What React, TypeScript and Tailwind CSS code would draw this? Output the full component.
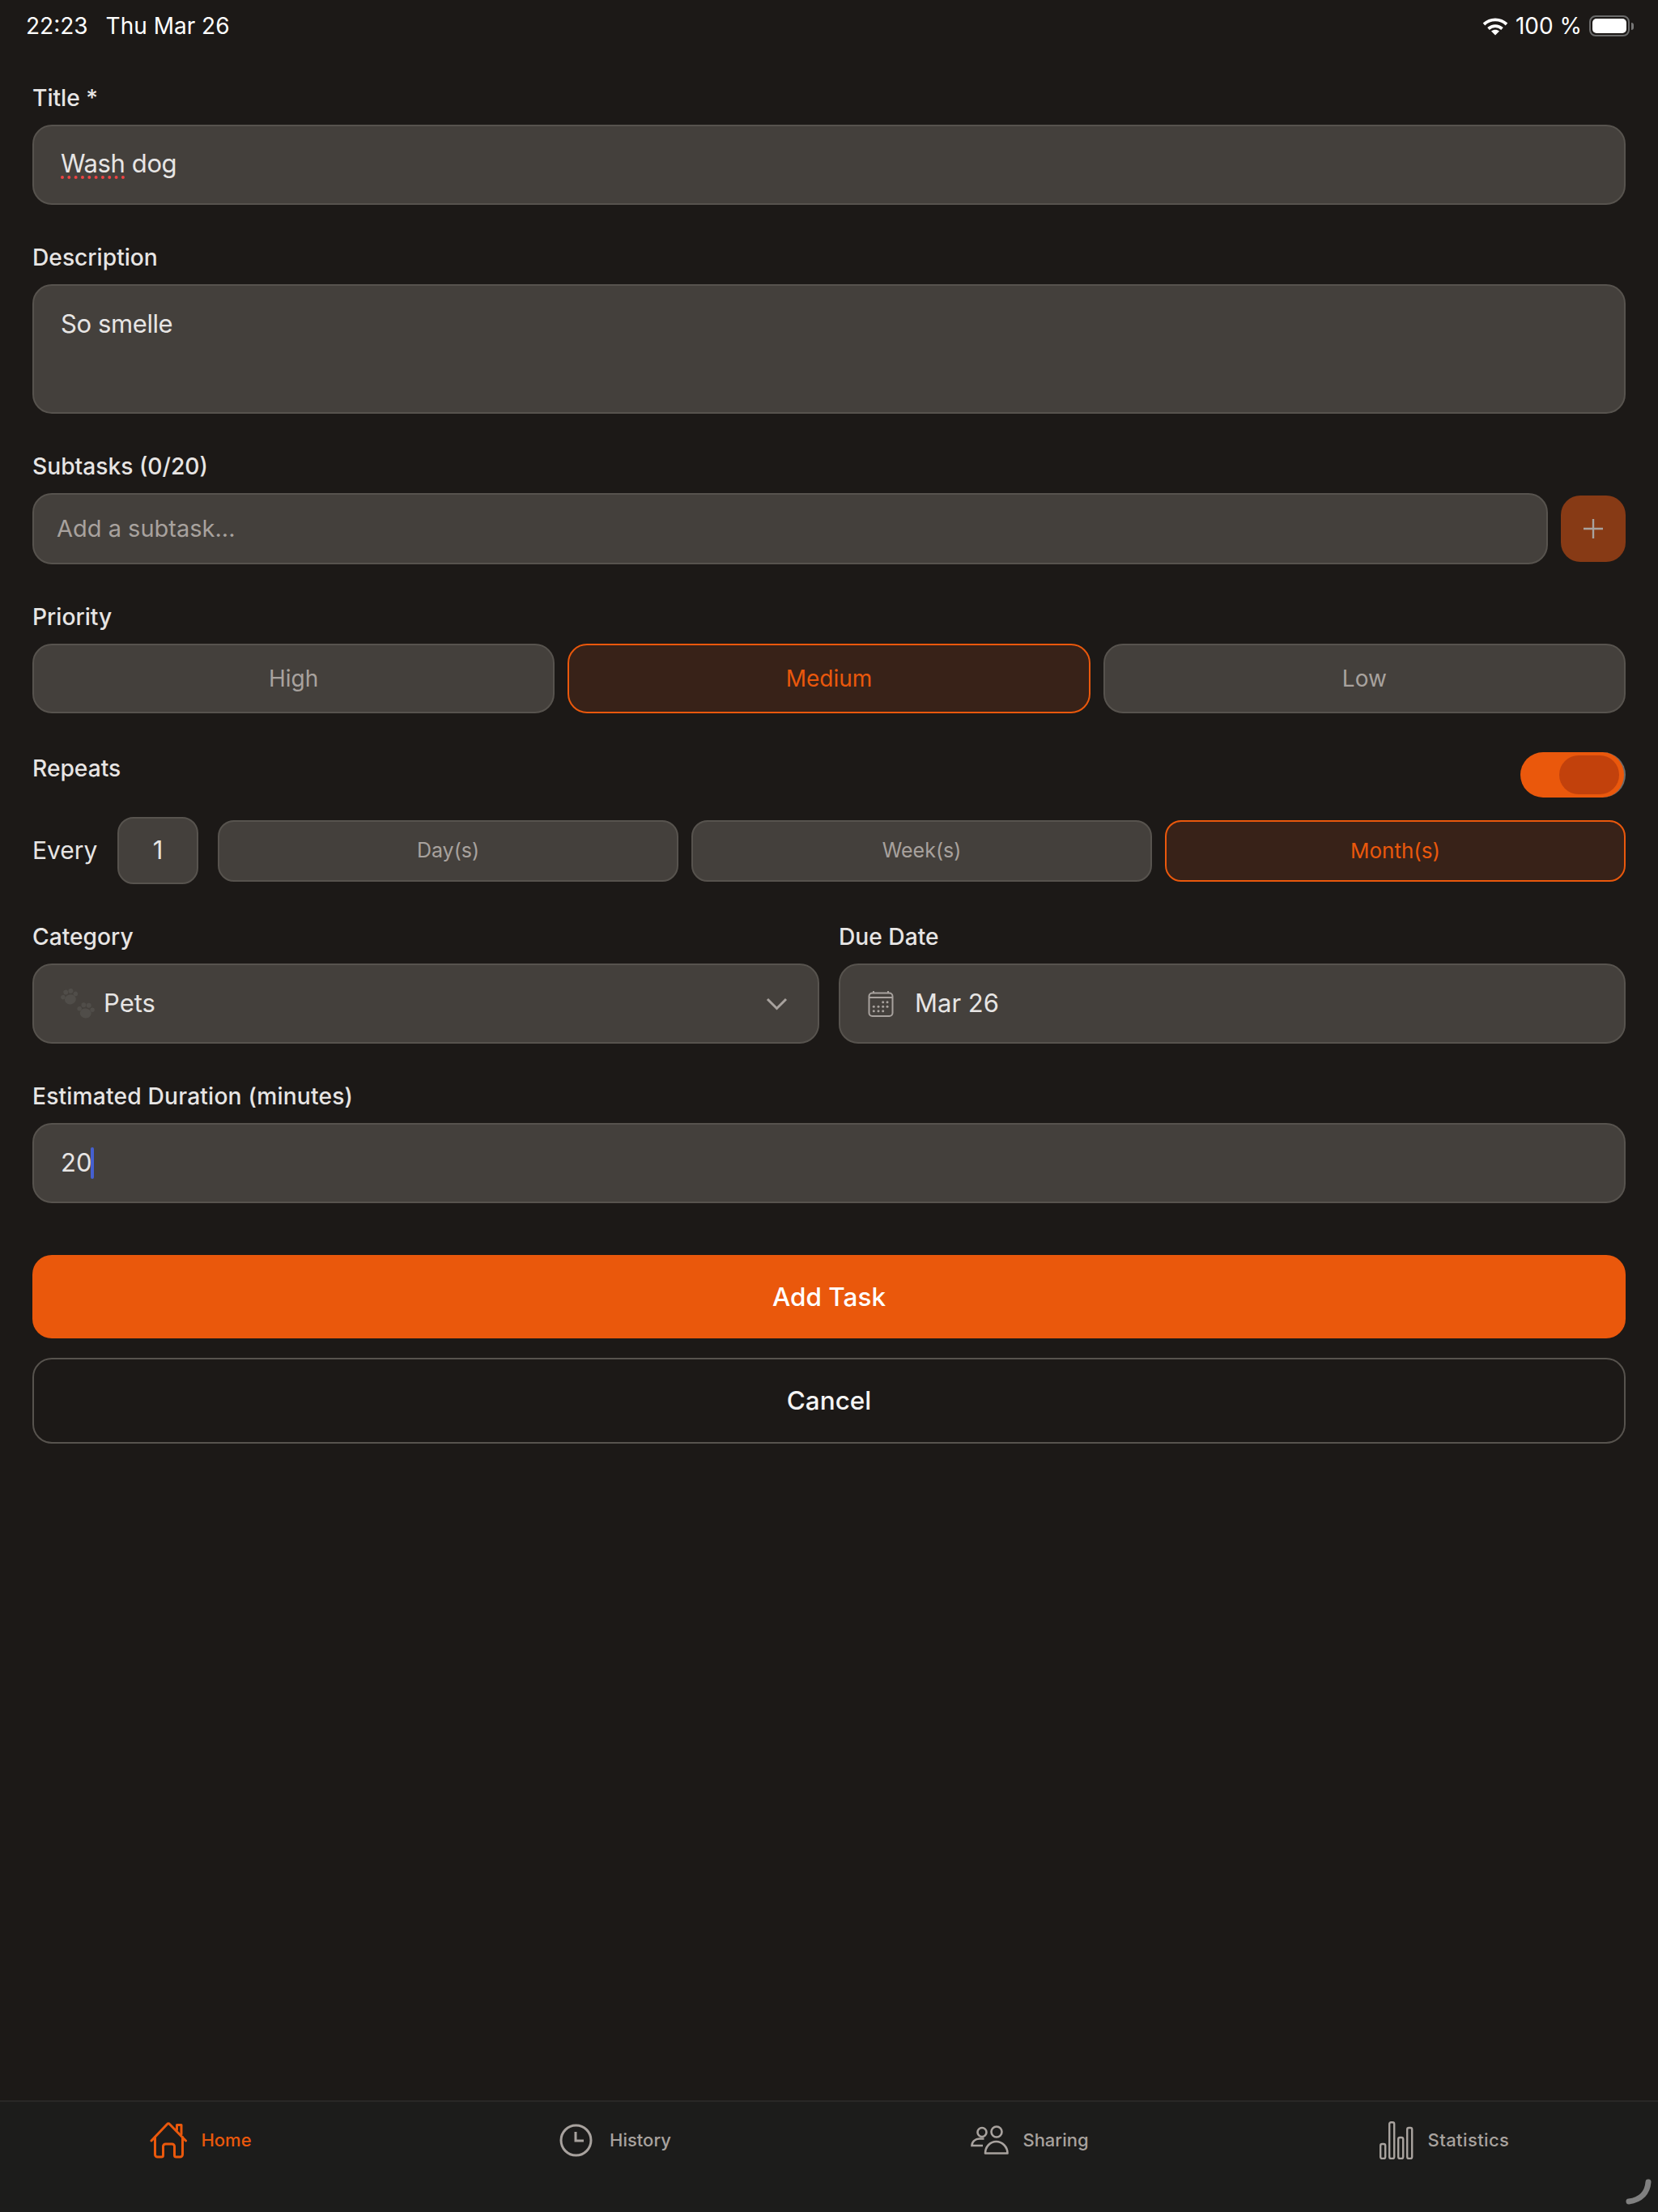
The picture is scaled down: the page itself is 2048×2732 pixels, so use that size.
const sans = "font-['Inter',sans-serif]";

function Label({ children }: { children: React.ReactNode }) {
  return <p className="text-[28.2px] leading-[40px] font-medium text-[#e7e5e4]">{children}</p>;
}

function Field({ label, children }: { label: React.ReactNode; children: React.ReactNode }) {
  return (
    <div className="flex flex-col gap-[13px]">
      <Label>{label}</Label>
      {children}
    </div>
  );
}

function Choice({ text, active, small }: { text: string; active?: boolean; small?: boolean }) {
  return (
    <button
      className={
        "flex-1 flex items-center justify-center border-2 " +
        (small ? "h-[76px] rounded-[20px] " : "h-[86px] rounded-[24px] text-[28px] ") +
        (small && active ? "text-[26px] " : "") +
        (small && !active ? "text-[25px] " : "") +
        (active
          ? "bg-[#382218] border-[#ea580c] text-[#ea580c]"
          : "bg-[#44403c] border-[#57534e] text-[#a8a29e]")
      }
    >
      {text}
    </button>
  );
}

function Wifi() {
  return (
    <svg width="32" height="23" viewBox="0 0 32 23" fill="none" stroke="white" strokeWidth="3.8">
      <path d="M2 9C10 1.5 22 1.5 30 9" />
      <path d="M7.5 14.5C12.5 10 19.5 10 24.5 14.5" />
      <path d="M16 22.5l-5-5c3-2.4 7-2.4 10 0z" fill="white" stroke="none" />
    </svg>
  );
}

function Battery() {
  return (
    <div className="flex items-center gap-[2px]">
      <div className="w-[50px] h-[26px] rounded-[8px] border-2 border-[#6b6b6b] p-[2px]">
        <div className="w-full h-full rounded-[5px] bg-white" />
      </div>
      <div className="w-[3px] h-[9px] rounded-r-full bg-[#777]" />
    </div>
  );
}

function Paws() {
  const paw = (
    <>
      <ellipse cx="0" cy="3.5" rx="7" ry="6" />
      <circle cx="-8" cy="-1.5" r="2.8" />
      <circle cx="-3.2" cy="-6.5" r="3" />
      <circle cx="3.2" cy="-6.5" r="3" />
      <circle cx="8" cy="-1.5" r="2.8" />
    </>
  );
  return (
    <svg width="42" height="38" viewBox="0 0 42 38" fill="#504d49">
      <g transform="translate(11 10) rotate(-15)">{paw}</g>
      <g transform="translate(31 27) rotate(5)">{paw}</g>
    </svg>
  );
}

function Calendar() {
  const dots = [
    [18.7, 13.7], [24, 13.7], [7.3, 19.3], [13, 19.3], [18.7, 19.3], [24, 19.3], [7.3, 24.7], [13, 24.7], [18.7, 24.7],
  ];
  return (
    <svg width="32" height="32" viewBox="0 0 32 32" fill="none" stroke="#a8a29e" strokeWidth="2">
      <rect x="1.5" y="2.5" width="29" height="28.5" rx="4" />
      <path d="M1.5 8h29" />
      <path d="M7 0v3M25 0v3" />
      {dots.map(([x, y]) => (
        <circle key={x + "-" + y} cx={x} cy={y} r="1.5" fill="#a8a29e" stroke="none" />
      ))}
    </svg>
  );
}

function Home() {
  return (
    <svg width="46" height="45" viewBox="0 0 46 45" fill="none" stroke="#ea580c" strokeWidth="3" strokeLinecap="round" strokeLinejoin="round">
      <path d="M2 23L21.5 2.5a2 2 0 0 1 3 0L44.5 23" />
      <path d="M6.5 18.5V40a3 3 0 0 0 3 3h5a2 2 0 0 0 2-2V30a3 3 0 0 1 3-3h8a3 3 0 0 1 3 3v11a2 2 0 0 0 2 2h5a3 3 0 0 0 3-3V18.5" />
      <path d="M33.5 9.5V3.5h5.5V15" />
    </svg>
  );
}

function Clock() {
  return (
    <svg width="41" height="41" viewBox="0 0 41 41" fill="none" stroke="#a8a29e" strokeWidth="3">
      <circle cx="20.5" cy="20.5" r="18.5" />
      <path d="M20 10v11h10" />
    </svg>
  );
}

function People() {
  return (
    <svg width="47" height="36" viewBox="0 0 47 36" fill="none" stroke="#a8a29e" strokeWidth="2.6">
      <circle cx="14" cy="8.5" r="5.5" />
      <circle cx="32" cy="8" r="6.5" />
      <path d="M15 25H1.5c0-5 4.5-8.5 9-8.5h6" />
      <path d="M18 34.5c0-8 6-14.5 13.5-14.5s14 6.5 14 14.5z" strokeLinejoin="round" />
    </svg>
  );
}

function Bars() {
  return (
    <svg width="42" height="47" viewBox="0 0 42 47" fill="none" stroke="#a8a29e" strokeWidth="2.4">
      <rect x="1.2" y="28" width="6" height="18" rx="2" />
      <rect x="12.2" y="1.2" width="6" height="44.8" rx="2" />
      <rect x="23.2" y="20" width="6" height="26" rx="2" />
      <rect x="34.2" y="8" width="6" height="38" rx="2" />
    </svg>
  );
}

function NavItem({ icon, text, active, gap }: { icon: React.ReactNode; text: string; active?: boolean; gap: string }) {
  return (
    <div className={"flex items-center justify-center pr-[16px] pb-[42px] " + gap}>
      {icon}
      <span className={"text-[22px] font-medium " + (active ? "text-[#ea580c]" : "text-[#a8a29e]")}>{text}</span>
    </div>
  );
}

export default function App() {
  return (
    <div className={"relative w-[2048px] h-[2732px] flex flex-col bg-[#1c1917] text-[#e7e5e4] " + sans}>
      <div className="h-[64px] flex items-center justify-between pl-[32px] pr-[30px] text-[28px] text-white">
        <div className="flex gap-[22px]">
          <span>22:23</span>
          <span>Thu Mar 26</span>
        </div>
        <div className="flex items-center gap-[9px]">
          <Wifi />
          <span>100 %</span>
          <Battery />
        </div>
      </div>

      <div className="flex-1 flex flex-col px-[40px] pt-[37px] gap-[45px]">
        <Field label="Title *">
          <div className="h-[99px] flex items-center pb-[2px] px-[33px] rounded-[24px] bg-[#44403c] border-2 border-[#57534e] text-[31px] tracking-[-0.4px]">
            <span className="underline decoration-dotted decoration-[#ef4444] decoration-[4px] underline-offset-[4px]">Wash</span>
            <span>&nbsp;dog</span>
          </div>
        </Field>

        <Field label="Description">
          <div className="h-[160px] px-[33px] pt-[24px] rounded-[24px] bg-[#44403c] border-2 border-[#57534e] text-[31px] tracking-[-0.4px]">
            So smelle
          </div>
        </Field>

        <Field label="Subtasks (0/20)">
          <div className="flex items-center gap-[16px]">
            <div className="flex-1 h-[88px] flex items-center px-[28px] rounded-[24px] bg-[#44403c] border-2 border-[#57534e] text-[29px] text-[#a8a29e]">
              Add a subtask...
            </div>
            <button className="w-[80px] h-[82px] flex items-center justify-center rounded-[24px] bg-[#873a15]">
              <svg width="26" height="26" viewBox="0 0 26 26" stroke="#a8a29e" strokeWidth="2.4">
                <path d="M13 1v24M1 13h24" />
              </svg>
            </button>
          </div>
        </Field>

        <Field label="Priority">
          <div className="flex gap-[16px]">
            <Choice text="High" />
            <Choice text="Medium" active />
            <Choice text="Low" />
          </div>
        </Field>

        <div className="flex flex-col gap-[24px] mt-[3px]">
          <div className="flex justify-between items-start">
            <Label>Repeats</Label>
            <div className="w-[130px] h-[56px] flex items-center justify-end pr-[6px] rounded-full bg-[#ea580c] border-r-2 border-[#6b6b6b]">
              <div className="w-[74px] h-[48px] rounded-[24px] bg-[#c2410c]" />
            </div>
          </div>
          <div className="flex items-center">
            <span className="w-[105px] text-[30px]">Every</span>
            <div className="w-[100px] h-[83px] mr-[24px] flex items-center justify-center rounded-[20px] bg-[#44403c] border-2 border-[#57534e] text-[31px]">
              1
            </div>
            <div className="flex-1 flex gap-[16px]">
              <Choice text="Day(s)" small />
              <Choice text="Week(s)" small />
              <Choice text="Month(s)" small active />
            </div>
          </div>
        </div>

        <div className="flex gap-[24px]">
          <div className="flex-1">
            <Field label="Category">
              <div className="h-[99px] flex items-center pl-[33px] pr-[37px] rounded-[24px] bg-[#44403c] border-2 border-[#57534e] text-[31px]">
                <Paws />
                <span className="ml-[11px] flex-1">Pets</span>
                <svg width="27" height="16" viewBox="0 0 27 16" fill="none" stroke="#a8a29e" strokeWidth="3">
                  <path d="M2 2l11.5 11.5L25 2" />
                </svg>
              </div>
            </Field>
          </div>
          <div className="flex-1">
            <Field label="Due Date">
              <div className="h-[99px] flex items-center gap-[26px] px-[34px] rounded-[24px] bg-[#44403c] border-2 border-[#57534e] text-[31px]">
                <Calendar />
                <span>Mar 26</span>
              </div>
            </Field>
          </div>
        </div>

        <Field label={<span className="tracking-[0.18px]">Estimated Duration (minutes)</span>}>
          <div className="h-[99px] flex items-center px-[33px] rounded-[24px] bg-[#44403c] border-2 border-[#57534e] text-[31px]">
            <span>20</span>
            <span className="w-[4px] h-[39px] -ml-[1px] rounded-full bg-[#4560d0]" />
          </div>
        </Field>

        <div className="flex flex-col gap-[24px] mt-[19px]">
          <button className="h-[103px] rounded-[24px] bg-[#ea580c] text-white text-[31.5px] font-medium">Add Task</button>
          <button className="h-[106px] rounded-[24px] border-2 border-[#57534e] text-[#f5f5f4] text-[31.5px] font-medium">Cancel</button>
        </div>
      </div>

      <div className="h-[138px] grid grid-cols-4 bg-[#1c1c1b] border-t-2 border-[#292827]">
        <NavItem icon={<Home />} text="Home" active gap="gap-[17px]" />
        <NavItem icon={<Clock />} text="History" gap="gap-[21px]" />
        <NavItem icon={<People />} text="Sharing" gap="gap-[17px]" />
        <NavItem icon={<Bars />} text="Statistics" gap="gap-[18px] tracking-[0.4px]" />
      </div>

      <svg className="absolute right-[8px] bottom-[9px]" width="32" height="32" viewBox="0 0 32 32" fill="none" stroke="#808080" strokeWidth="7" strokeLinecap="round">
        <path d="M28 4C27 17 19 26 4 28" />
      </svg>
    </div>
  );
}
